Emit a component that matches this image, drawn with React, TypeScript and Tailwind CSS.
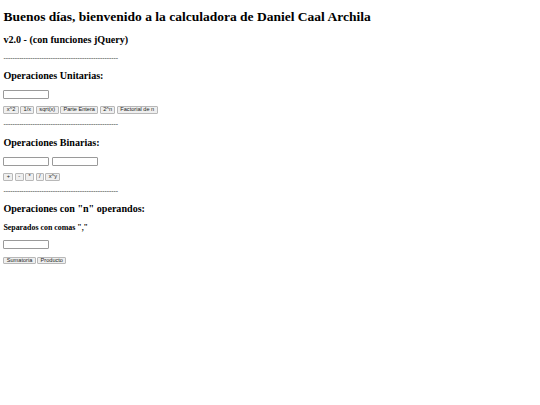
import React from "react"

const DASHES = "-".repeat(51)

function Heading({ children }: { children: React.ReactNode }) {
  return <h2 className="text-[10.1px] font-bold leading-[1.15] my-[8.4px]">{children}</h2>
}

function Dashes() {
  return <p className="text-[6.75px] leading-[1.15] my-[6.75px] whitespace-nowrap">{DASHES}</p>
}

function Field() {
  return (
    <input
      type="text"
      className="w-[46px] h-[9px] border border-[#9a9a9a] rounded-[1px] bg-white text-[5.6px] px-[1px] outline-none"
    />
  )
}

function Buttons({ labels }: { labels: string[] }) {
  return (
    <div className="flex gap-[1.5px] mt-[7.5px]">
      {labels.map(label => (
        <button
          key={label}
          type="button"
          className="h-[7.5px] px-[2.4px] border border-[#b8b8b8] rounded-[1px] bg-[#efefef] text-[5.6px] leading-none text-[#222] font-['Liberation_Sans',Arial,sans-serif]"
        >
          {label}
        </button>
      ))}
    </div>
  )
}

export default function App() {
  return (
    <div className="px-[3.4px] font-['Liberation_Serif','Times_New_Roman',serif] text-black bg-white min-h-[405px] flow-root">
      <h1 className="text-[13.5px] font-bold leading-[1.15] my-[9px] whitespace-nowrap">
        Buenos días, bienvenido a la calculadora de Daniel Caal Archila
      </h1>
      <Heading>v2.0 - (con funciones jQuery)</Heading>
      <Dashes />

      {/* Unitarias */}
      <Heading>Operaciones Unitarias:</Heading>
      <div className="flex">
        <Field />
      </div>
      <Buttons labels={["x^2", "1/x", "sqrt(x)", "Parte Entera", "2^n", "Factorial de n"]} />
      <Dashes />

      {/* Binarias */}
      <Heading>Operaciones Binarias:</Heading>
      <div className="flex gap-[2.5px]">
        <Field />
        <Field />
      </div>
      <Buttons labels={["+", "-", "*", "/", "x^y"]} />
      <Dashes />

      {/* n operandos */}
      <Heading>Operaciones con "n" operandos:</Heading>
      <h3 className="text-[7.9px] font-bold leading-[1.15] my-[7.9px]">Separados con comas ","</h3>
      <div className="flex">
        <Field />
      </div>
      <Buttons labels={["Sumatoria", "Producto"]} />
    </div>
  )
}
